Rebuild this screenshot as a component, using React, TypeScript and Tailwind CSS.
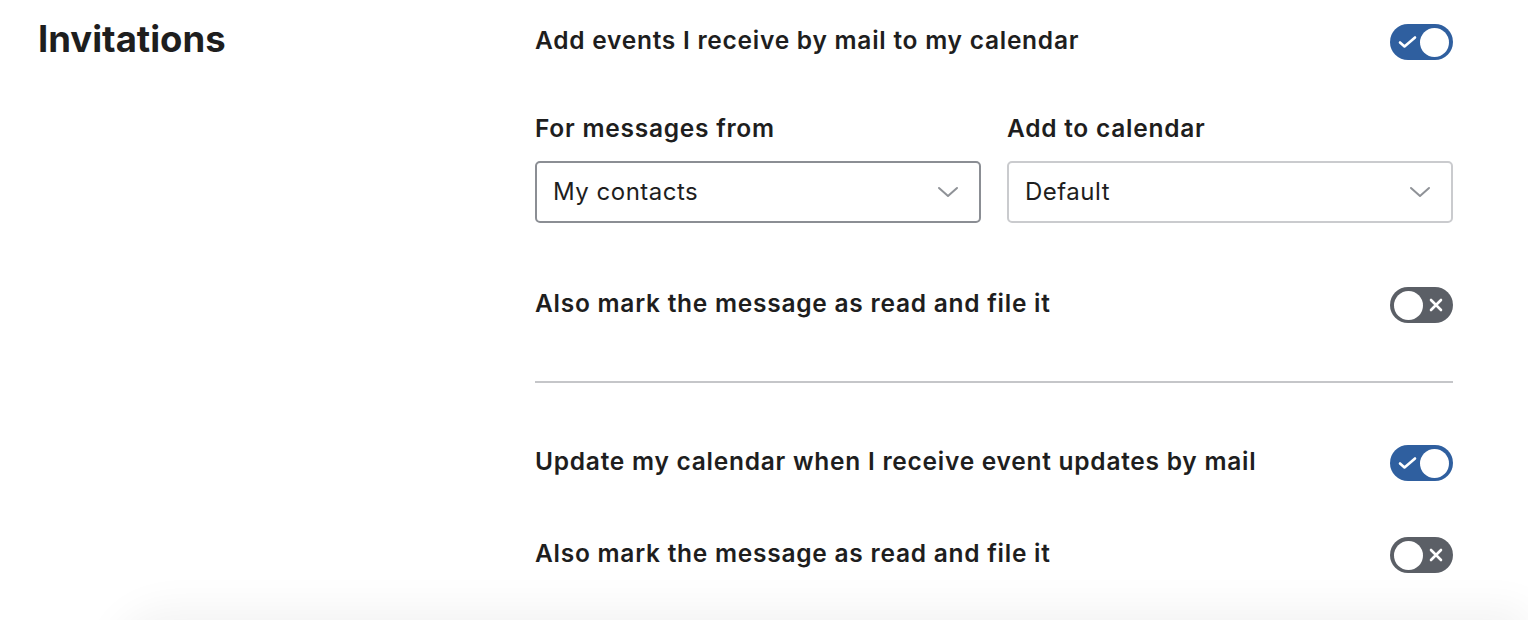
import React from "react";

const font = { fontFamily: 'Inter, "Liberation Sans", sans-serif' };

function Toggle({ on }: { on: boolean }) {
  if (on) {
    return (
      <div className="w-[63px] h-[36px] rounded-full bg-[#2f5f9f] flex items-center justify-between pl-[8px] pr-[4px] shrink-0">
        <svg width="19" height="14" viewBox="0 0 19 14">
          <path d="M2 7.5 L6.5 11.5 L17 2.5" stroke="white" strokeWidth="2.6" fill="none" strokeLinecap="round" strokeLinejoin="round" />
        </svg>
        <div className="w-[29px] h-[29px] rounded-full bg-white" />
      </div>
    );
  }
  return (
    <div className="w-[63px] h-[36px] rounded-full bg-[#5b5f66] flex items-center justify-between pl-[4px] pr-[10px] shrink-0">
      <div className="w-[29px] h-[29px] rounded-full bg-white" />
      <svg width="14" height="14" viewBox="0 0 14 14">
        <path d="M2 2 L12 12 M12 2 L2 12" stroke="white" strokeWidth="2.6" fill="none" strokeLinecap="round" />
      </svg>
    </div>
  );
}

function Select({ value, dark }: { value: string; dark?: boolean }) {
  return (
    <div
      className={`flex-1 h-[62px] rounded-[5px] border-2 bg-white flex items-center justify-between pl-[16px] pr-[20px] ${
        dark ? "border-[#8b8e94]" : "border-[#cacbce]"
      }`}
    >
      <span className="text-[24px] tracking-[0.5px] text-[#1e1e1e]">{value}</span>
      <svg width="22" height="14" viewBox="0 0 22 14">
        <path d="M2 3 L11 11 L20 3" stroke="#8f9297" strokeWidth="2" fill="none" strokeLinecap="round" strokeLinejoin="round" />
      </svg>
    </div>
  );
}

function Row({ label, on }: { label: string; on: boolean }) {
  return (
    <div className="flex items-center justify-between h-[36px]">
      <span className="text-[24.5px] tracking-[0.75px] font-semibold text-[#1e1e1e] -mt-[3px]">{label}</span>
      <Toggle on={on} />
    </div>
  );
}

export default function App() {
  return (
    <div className="bg-white min-h-[620px] overflow-hidden" style={font}>
      <div className="flex pl-[38px]">
        <div className="w-[497px] shrink-0 pt-[16px]">
          <h2 className="text-[36.5px] font-bold text-[#1e1e1e] leading-[46px]">Invitations</h2>
        </div>
        <div className="w-[918px] shrink-0 pt-[24px]">
          <Row label="Add events I receive by mail to my calendar" on={true} />
          <div className="flex gap-[26px] mt-[52px]">
            <div className="flex-1 flex flex-col">
              <span className="text-[24.5px] tracking-[0.75px] font-semibold text-[#1e1e1e] leading-[32px]">For messages from</span>
              <div className="mt-[17px] flex">
                <Select value="My contacts" dark />
              </div>
            </div>
            <div className="flex-1 flex flex-col">
              <span className="text-[24.5px] tracking-[0.75px] font-semibold text-[#1e1e1e] leading-[32px]">Add to calendar</span>
              <div className="mt-[17px] flex">
                <Select value="Default" />
              </div>
            </div>
          </div>
          <div className="mt-[64px]">
            <Row label="Also mark the message as read and file it" on={false} />
          </div>
          <div className="mt-[58px] h-[2px] bg-[#c5c6c9]" />
          <div className="mt-[62px]">
            <Row label="Update my calendar when I receive event updates by mail" on={true} />
          </div>
          <div className="mt-[56px]">
            <Row label="Also mark the message as read and file it" on={false} />
          </div>
        </div>
      </div>
      <div className="mt-[47px] ml-[110px] h-[60px] rounded-tl-[80px] bg-white shadow-[0_-12px_40px_rgba(0,0,0,0.05)]" />
    </div>
  );
}
